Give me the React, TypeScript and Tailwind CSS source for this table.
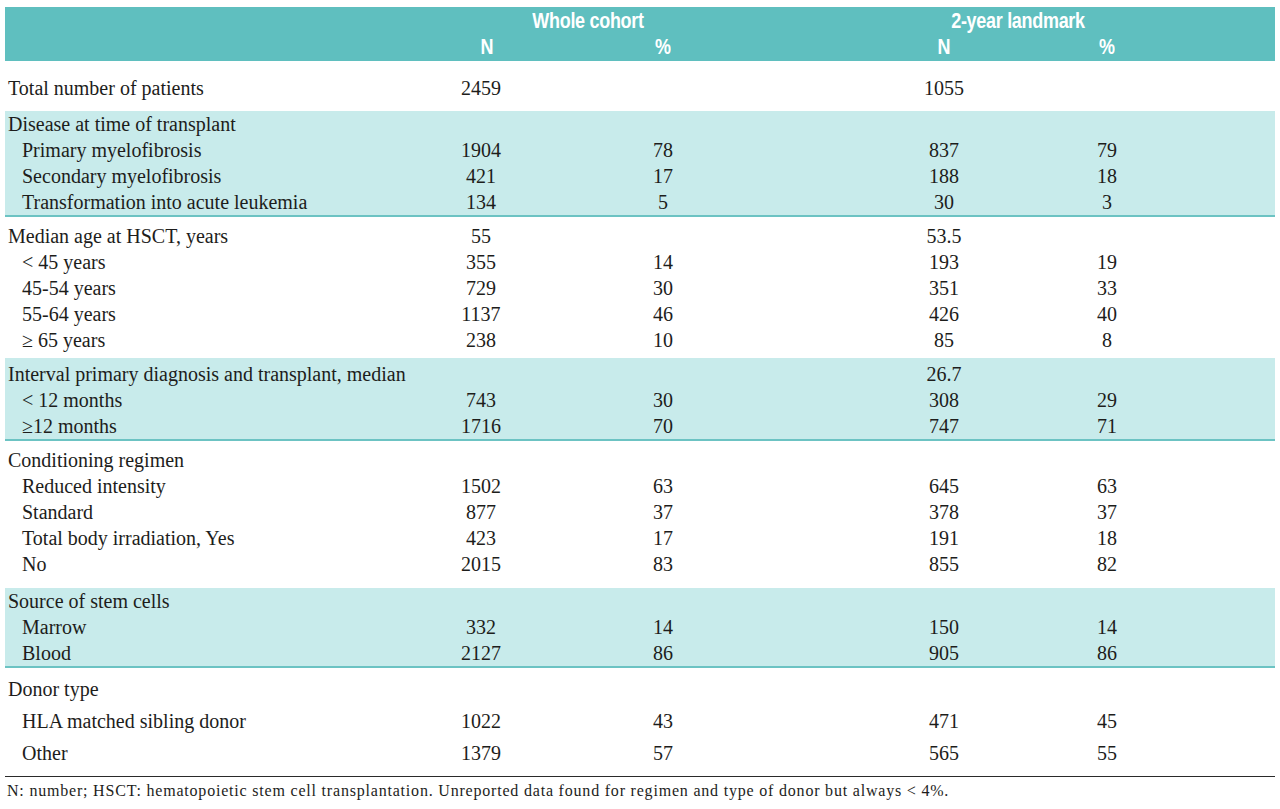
type Row = {
  label: string
  sub?: boolean
  n1?: string
  p1?: string
  n2?: string
  p2?: string
}

type Section = {
  band: boolean
  pad: string
  rowH: string
  rows: Row[]
}

const sections: Section[] = [
  {
    band: false,
    pad: 'pt-[14px] pb-[10px]',
    rowH: 'h-[26px]',
    rows: [{ label: 'Total number of patients', n1: '2459', n2: '1055' }],
  },
  {
    band: true,
    pad: 'pt-0 pb-0',
    rowH: 'h-[26px]',
    rows: [
      { label: 'Disease at time of transplant' },
      { label: 'Primary myelofibrosis', sub: true, n1: '1904', p1: '78', n2: '837', p2: '79' },
      { label: 'Secondary myelofibrosis', sub: true, n1: '421', p1: '17', n2: '188', p2: '18' },
      { label: 'Transformation into acute leukemia', sub: true, n1: '134', p1: '5', n2: '30', p2: '3' },
    ],
  },
  {
    band: false,
    pad: 'pt-[6px] pb-[5px]',
    rowH: 'h-[26px]',
    rows: [
      { label: 'Median age at HSCT, years', n1: '55', n2: '53.5' },
      { label: '< 45 years', sub: true, n1: '355', p1: '14', n2: '193', p2: '19' },
      { label: '45-54 years', sub: true, n1: '729', p1: '30', n2: '351', p2: '33' },
      { label: '55-64 years', sub: true, n1: '1137', p1: '46', n2: '426', p2: '40' },
      { label: '≥ 65 years', sub: true, n1: '238', p1: '10', n2: '85', p2: '8' },
    ],
  },
  {
    band: true,
    pad: 'pt-[3px] pb-0',
    rowH: 'h-[26px]',
    rows: [
      { label: 'Interval primary diagnosis and transplant, median', n2: '26.7' },
      { label: '< 12 months', sub: true, n1: '743', p1: '30', n2: '308', p2: '29' },
      { label: '≥12 months', sub: true, n1: '1716', p1: '70', n2: '747', p2: '71' },
    ],
  },
  {
    band: false,
    pad: 'pt-[6px] pb-[11px]',
    rowH: 'h-[26px]',
    rows: [
      { label: 'Conditioning regimen' },
      { label: 'Reduced intensity', sub: true, n1: '1502', p1: '63', n2: '645', p2: '63' },
      { label: 'Standard', sub: true, n1: '877', p1: '37', n2: '378', p2: '37' },
      { label: 'Total body irradiation, Yes', sub: true, n1: '423', p1: '17', n2: '191', p2: '18' },
      { label: 'No', sub: true, n1: '2015', p1: '83', n2: '855', p2: '82' },
    ],
  },
  {
    band: true,
    pad: 'pt-0 pb-0',
    rowH: 'h-[26px]',
    rows: [
      { label: 'Source of stem cells' },
      { label: 'Marrow', sub: true, n1: '332', p1: '14', n2: '150', p2: '14' },
      { label: 'Blood', sub: true, n1: '2127', p1: '86', n2: '905', p2: '86' },
    ],
  },
  {
    band: false,
    pad: 'pt-[5px] pb-[7px]',
    rowH: 'h-[32px]',
    rows: [
      { label: 'Donor type' },
      { label: 'HLA matched sibling donor', sub: true, n1: '1022', p1: '43', n2: '471', p2: '45' },
      { label: 'Other', sub: true, n1: '1379', p1: '57', n2: '565', p2: '55' },
    ],
  },
]

const cols = 'grid grid-cols-[395px_162px_202px_100px_160px_166px_1fr] items-center'

export default function App() {
  return (
    <div className="min-h-[809px] bg-white pt-[7px] font-['Liberation_Serif',serif] text-[#1d1d1b]">
      <div className="mx-[5px] w-[1270px]">
        {/* header band */}
        <div className="bg-[#5fbfbf] font-['Liberation_Sans',sans-serif] text-[18px] font-bold text-white">
          <div className={`${cols} h-[27px] pt-[1px]`}>
            <div />
            <div className="col-span-2 pl-[12px] text-center">
              <span className="inline-block scale-y-[1.2] tracking-[-0.3px]">Whole cohort</span>
            </div>
            <div />
            <div className="col-span-2 pr-[18px] text-center">
              <span className="inline-block scale-y-[1.2] tracking-[-0.3px]">2-year landmark</span>
            </div>
            <div />
          </div>
          <div className={`${cols} h-[27px]`}>
            <div />
            <div className="pl-[12px] text-center">
              <span className="inline-block scale-y-[1.2]">N</span>
            </div>
            <div className="text-center">
              <span className="inline-block scale-y-[1.2]">%</span>
            </div>
            <div />
            <div className="text-center">
              <span className="inline-block scale-y-[1.2]">N</span>
            </div>
            <div className="text-center">
              <span className="inline-block scale-y-[1.2]">%</span>
            </div>
            <div />
          </div>
        </div>

        {sections.map((section, i) => (
          <div
            key={i}
            className={`${section.pad} ${
              section.band ? 'border-b-2 border-[#6cc3c3] bg-[#c8ebeb]' : ''
            }`}
          >
            {section.rows.map((row) => (
              <div key={row.label} className={`${cols} ${section.rowH} text-[20px] leading-none`}>
                <div className={`whitespace-nowrap ${row.sub ? 'pl-[17px]' : 'pl-[3px]'}`}>{row.label}</div>
                <div className="text-center">{row.n1}</div>
                <div className="text-center">{row.p1}</div>
                <div />
                <div className="text-center">{row.n2}</div>
                <div className="text-center">{row.p2}</div>
                <div />
              </div>
            ))}
          </div>
        ))}

        <div className="border-t border-[#2a2a2a] pt-[4px] pl-[2px] text-[16px] leading-[20px] tracking-[0.8px]">
          N: number; HSCT: hematopoietic stem cell transplantation. Unreported data found for regimen and type of donor but always &lt; 4%.
        </div>
      </div>
    </div>
  )
}
